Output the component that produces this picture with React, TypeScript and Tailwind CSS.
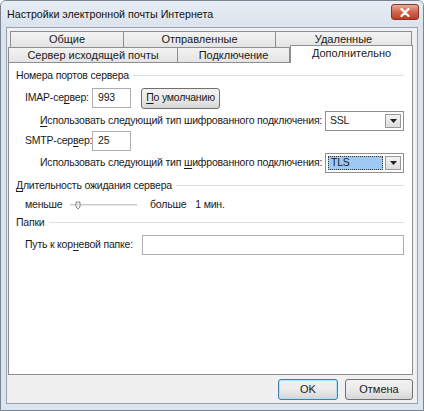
import React from "react";

const U = ({ children }: { children: React.ReactNode }) => <span className="underline underline-offset-2">{children}</span>;

function GroupHeader({ title }: { title: React.ReactNode }) {
  return (
    <div className="flex items-center h-[14px]">
      <span className="pr-[4px] whitespace-nowrap shrink-0">{title}</span>
      <div className="flex-1 h-[2px] border-t border-[#d5dfe5] border-b border-b-white" />
    </div>
  );
}

function Input({ value, w }: { value?: string; w: string }) {
  return (
    <div className={`${w} shrink-0 h-[20px] border border-[#abadb3] bg-white flex items-center px-[5px]`}>
      {value}
    </div>
  );
}

function Select({ value, selected }: { value: string; selected?: boolean }) {
  return (
    <div className="w-[79px] shrink-0 h-[20px] border border-[#8e8f8f] bg-white flex items-center p-[2px] gap-[2px]">
      <div
        className={`flex-1 h-full flex items-center px-[2px] ${
          selected ? "bg-[#9ccaf5] border border-dotted border-[#333]" : ""
        }`}
      >
        {value}
      </div>
      <div className="w-[16px] h-full border border-[#9a9a9a] bg-gradient-to-b from-[#f4f4f4] to-[#dcdcdc] flex items-center justify-center">
        <svg width="7" height="4" viewBox="0 0 7 4">
          <polygon points="0,0 7,0 3.5,4" fill="#222" />
        </svg>
      </div>
    </div>
  );
}

function Button({ children, w, def }: { children: React.ReactNode; w: string; def?: boolean }) {
  return (
    <div
      className={`${w} shrink-0 h-[21px] rounded-[3px] border ${
        def ? "border-[#3c7fb1] shadow-[inset_0_0_0_1px_#aee3f7]" : "border-[#707070]"
      } bg-gradient-to-b from-[#f2f2f2] via-[#ebebeb] to-[#d6d6d6] flex items-center justify-center`}
    >
      {children}
    </div>
  );
}

export default function App() {
  return (
    <div
      className="w-[424px] h-[411px] bg-[#dce4ed] border border-[#7a8591] rounded-t-[6px] flex flex-col text-[11px] text-[#1a1a1a] overflow-hidden whitespace-nowrap"
      style={{ fontFamily: '"Liberation Sans", Arial, sans-serif' }}
    >
      {/* Title bar */}
      <div className="h-[26px] flex items-center pl-[6px] pr-[4px] bg-gradient-to-b from-[#e7edf4] to-[#dbe3ec]">
        <span className="text-[10.7px] text-[#111] flex-1">Настройки электронной почты Интернета</span>
        <div className="w-[28px] h-[16px] mb-[4px] rounded-[3px] border border-[#7d3a2e] bg-gradient-to-b from-[#e9a995] via-[#d1654f] to-[#c23a22] flex items-center justify-center">
          <svg width="10" height="9" viewBox="0 0 10 9">
            <path d="M1.5 1 L8.5 8 M8.5 1 L1.5 8" stroke="#fff" strokeWidth="2.2" strokeLinecap="round" />
          </svg>
        </div>
      </div>

      {/* Client area */}
      <div className="flex-1 mx-[5px] mb-[6px] border border-[#95a3b3] bg-[#f0f0f0] flex flex-col">
        <div className="pt-[3px] pl-[1px] pr-[3px]">
          {/* Tab row 1 */}
          <div className="flex h-[16px] ml-[2px]">
            <div className="w-[114px] border border-[#8c8e94] border-b-0 bg-gradient-to-b from-[#f3f3f3] to-[#e4e4e4] flex items-center justify-center">Общие</div>
            <div className="w-[152px] border border-l-0 border-[#8c8e94] border-b-0 bg-gradient-to-b from-[#f3f3f3] to-[#e4e4e4] flex items-center justify-center">Отправленные</div>
            <div className="w-[136px] border border-l-0 border-[#8c8e94] border-b-0 bg-gradient-to-b from-[#f3f3f3] to-[#e4e4e4] flex items-center justify-center">Удаленные</div>
          </div>
          {/* Tab row 2 */}
          <div className="flex h-[15px] items-end relative">
            <div className="w-[170px] h-[15px] border border-[#8c8e94] border-b-0 bg-gradient-to-b from-[#f3f3f3] to-[#e4e4e4] flex items-center justify-center">Сервер исходящей почты</div>
            <div className="w-[112px] h-[15px] border border-l-0 border-[#8c8e94] border-b-0 bg-gradient-to-b from-[#f3f3f3] to-[#e4e4e4] flex items-center justify-center">Подключение</div>
            <div className="w-[123px] h-[18px] -mb-[1px] border border-[#8c8e94] border-b-0 bg-white flex items-center justify-center relative z-10 pb-[2px]">Дополнительно</div>
          </div>
          {/* Panel */}
          <div className="h-[313px] w-[405px] border border-[#8c8e94] bg-white pl-[7px] pr-[8px] text-[10.5px] tracking-[-0.2px]">
            <div className="mt-[6px]">
              <GroupHeader title="Номера портов сервера" />
            </div>
            <div className="flex items-center h-[20px] mt-[5px] pl-[9px]">
              <span className="w-[67px] shrink-0">IMAP-се<U>р</U>вер:</span>
              <Input value="993" w="w-[39px]" />
              <div className="ml-[10px]">
                <Button w="w-[79px]"><span><U>П</U>о умолчанию</span></Button>
              </div>
            </div>
            <div className="flex items-center h-[21px] mt-[2px] pl-[24px] justify-between">
              <span><U>И</U>спользовать следующий тип шифрованного подключения:</span>
              <Select value="SSL" />
            </div>
            <div className="flex items-center h-[20px] pl-[9px]">
              <span className="w-[67px] shrink-0">SMTP-сер<U>в</U>ер:</span>
              <Input value="25" w="w-[39px]" />
            </div>
            <div className="flex items-center h-[21px] mt-[1px] pl-[24px] justify-between">
              <span>Использовать следующий тип <U>ш</U>ифрованного подключения:</span>
              <Select value="TLS" selected />
            </div>
            <div className="mt-[6px]">
              <GroupHeader title={<><U>Д</U>лительность ожидания сервера</>} />
            </div>
            <div className="flex items-center h-[16px] mt-[4px] pl-[9px]">
              <span className="w-[45px] shrink-0">меньше</span>
              <svg width="70" height="12" viewBox="0 0 70 12" className="shrink-0">
                <line x1="0" y1="5.5" x2="67" y2="5.5" stroke="#c8c8c8" strokeWidth="1" />
                <line x1="0" y1="6.5" x2="67" y2="6.5" stroke="#e8e8e8" strokeWidth="1" />
                <path d="M6 3 L10 3 L10 8 L8 10 L6 8 Z" fill="#eeeeee" stroke="#8a8a8a" strokeWidth="1" />
              </svg>
              <span className="ml-[10px]">больше</span>
              <span className="ml-[9px]">1 мин.</span>
            </div>
            <div className="mt-[3px]">
              <GroupHeader title="Папки" />
            </div>
            <div className="flex items-center h-[20px] mt-[5px] pl-[9px]">
              <span className="w-[117px] shrink-0">Путь к кор<U>н</U>евой папке:</span>
              <div className="flex-1">
                <Input w="w-full" />
              </div>
            </div>
          </div>
        </div>
        {/* Buttons */}
        <div className="flex justify-end gap-[7px] pr-[4px] mt-[4px]">
          <Button w="w-[60px]" def>OK</Button>
          <Button w="w-[68px]">Отмена</Button>
        </div>
      </div>
    </div>
  );
}
